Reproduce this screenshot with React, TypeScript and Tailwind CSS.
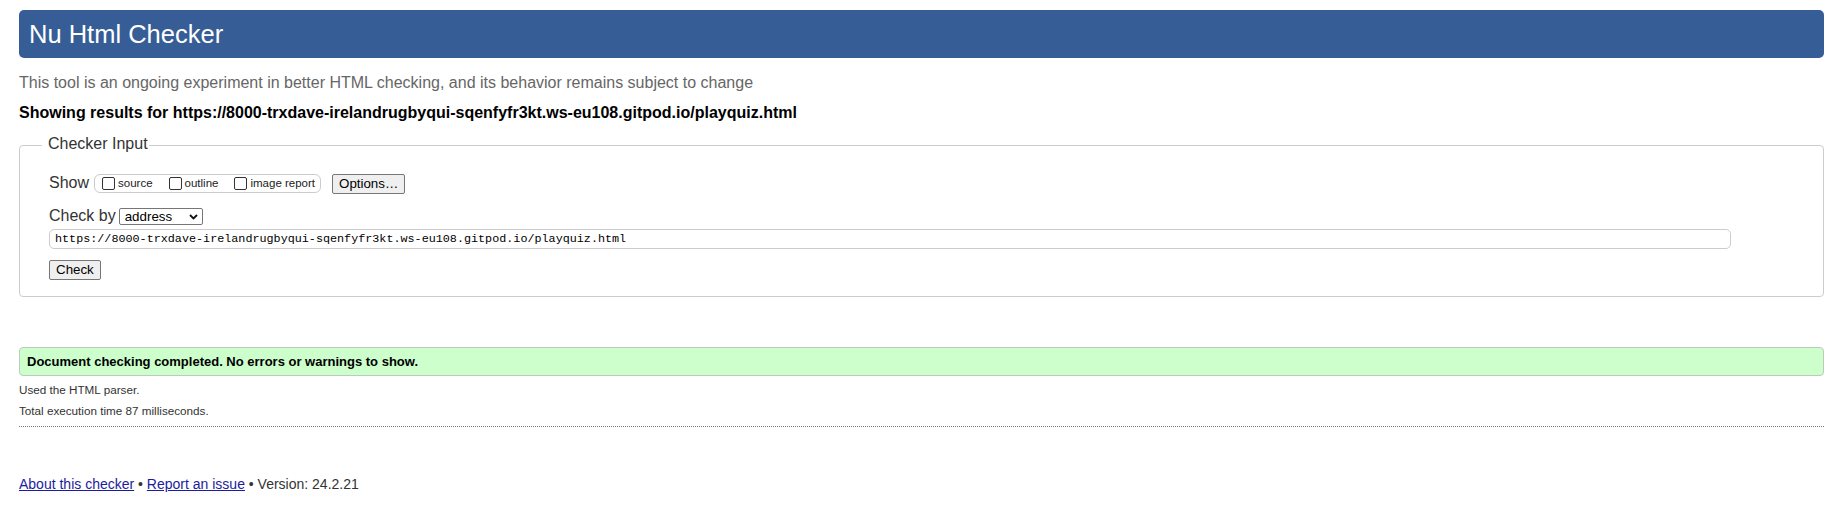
const url =
  "https://8000-trxdave-irelandrugbyqui-sqenfyfr3kt.ws-eu108.gitpod.io/playquiz.html";

function Checkbox({ label }: { label: string }) {
  return (
    <label className="flex items-center">
      <span className="block w-[13px] h-[13px] border border-[#333] rounded-[2px] bg-white" />
      <span className="ml-[3px] text-[11.5px] leading-[13px] text-[#222]">{label}</span>
    </label>
  );
}

function Button({ children }: { children: React.ReactNode }) {
  return (
    <button className="h-[20px] px-[6px] border border-[#767676] rounded-[2px] bg-[#efefef] text-[13.33px] leading-[16px] text-black">
      {children}
    </button>
  );
}

export default function App() {
  return (
    <div className="min-h-screen bg-white px-[19px] pt-[10px] pb-[24px] font-['Liberation_Sans',Arial,sans-serif] text-[#333]">
      {/* Header */}
      <header className="h-[48px] flex items-center pl-[10px] rounded-[5px] bg-[#365d95]">
        <h1 className="text-[25.5px] leading-[30px] text-white">Nu Html Checker</h1>
      </header>

      <p className="mt-[16px] text-[16px] leading-[18px] text-[#666]">
        This tool is an ongoing experiment in better HTML checking, and its behavior remains subject to change
      </p>
      <p className="mt-[12px] text-[16px] leading-[18px] font-bold text-black">
        Showing results for {url}
      </p>

      {/* Checker input */}
      <fieldset className="mt-[13px] border border-[#cccccc] rounded-[4px] px-[29px] pt-[17px] pb-[15px]">
        <legend className="ml-[-7px] pl-[6px] pr-[1px] pb-[3px] text-[16px] leading-[18px] text-[#333]">
          Checker Input
        </legend>

        <div className="h-[20px] flex items-center">
          <span className="text-[16px] leading-[18px] text-[#333]">Show</span>
          <div className="ml-[5px] h-[19px] flex items-center gap-[16px] pl-[7px] pr-[5px] border border-[#cccccc] rounded-[6px]">
            <Checkbox label="source" />
            <Checkbox label="outline" />
            <Checkbox label="image report" />
          </div>
          <div className="ml-[11px]">
            <Button>Options…</Button>
          </div>
        </div>

        <div className="mt-[13px] h-[19px] flex items-end">
          <span className="text-[16px] leading-[19px] text-[#333]">Check by</span>
          <div className="ml-[3px] w-[84px] h-[17px] flex items-center justify-between pl-[5px] pr-[3px] border border-[#767676] rounded-[2px] bg-white">
            <span className="text-[13.33px] leading-[15px] text-black">address</span>
            <svg width="9" height="6" viewBox="0 0 9 6" className="mr-[1px]">
              <path d="M1 1 L4.5 4.5 L8 1" fill="none" stroke="#111" strokeWidth="1.8" />
            </svg>
          </div>
        </div>

        <div className="mt-[4px] w-[1682px] h-[20px] flex items-center px-[5px] border border-[#cccccc] rounded-[5px] bg-white">
          <span className="font-['Liberation_Mono',monospace] text-[11.75px] leading-[14px] text-black">{url}</span>
        </div>

        <div className="mt-[8px]">
          <Button>Check</Button>
        </div>
      </fieldset>

      {/* Result */}
      <div className="mt-[50px] h-[29px] flex items-center pl-[7px] border border-[#bbccbb] rounded-[4px] bg-[#ccffcc]">
        <span className="text-[13px] leading-[15px] font-bold text-black">
          Document checking completed. No errors or warnings to show.
        </span>
      </div>
      <p className="mt-[7px] text-[11.7px] leading-[14px] text-[#333]">Used the HTML parser.</p>
      <p className="mt-[7px] text-[11.7px] leading-[14px] text-[#333]">Total execution time 87 milliseconds.</p>
      <div className="mt-[8px] border-t border-dotted border-[#777]" />

      {/* Footer */}
      <p className="mt-[49px] text-[14px] leading-[16px] text-[#333]">
        <a href="#" className="underline text-[#1c1c9e]">About this checker</a>
        {" • "}
        <a href="#" className="underline text-[#1c1c9e]">Report an issue</a>
        {" • Version: 24.2.21"}
      </p>
    </div>
  );
}
